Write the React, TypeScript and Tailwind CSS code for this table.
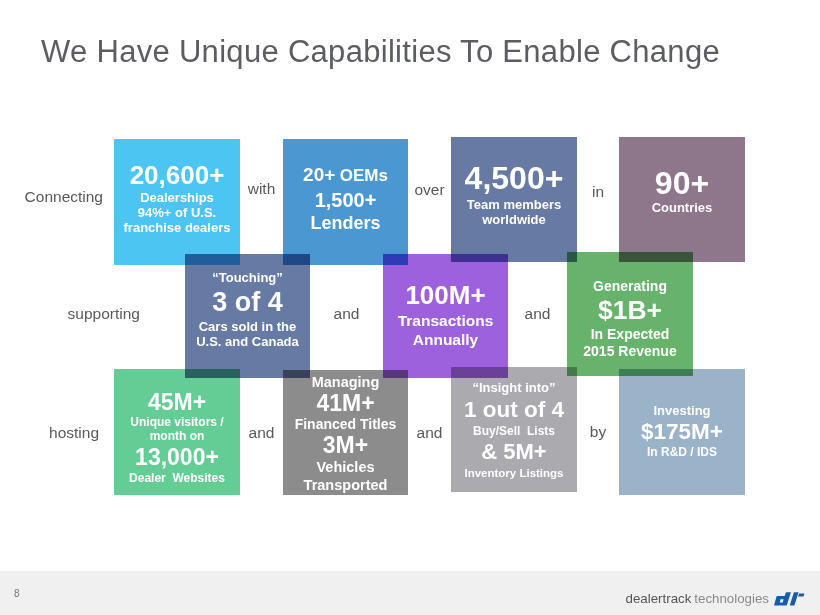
import React from 'react';

const font = { fontFamily: '"Liberation Sans", Arial, sans-serif' };

function Word({ className, children }: { className: string; children: React.ReactNode }) {
  return <div className={`flex items-center text-[15.5px] text-[#595959] ${className}`}>{children}</div>;
}

function Logo() {
  return (
    <svg width="31" height="14" viewBox="0 0 30 13" className="ml-[5px]">
      <path fillRule="evenodd" fill="#1a5ba6" d="M0 12.8 L2.6 3.6 L10.4 3.6 L11.6 0 L16.4 0 L12.3 12.8 Z M5.6 9.8 L6.4 6.8 L9.3 6.8 L8.4 9.8 Z" />
      <path fill="#1a5ba6" d="M15.2 12.8 L19.3 0 L23.8 0 L19.7 12.8 Z" />
      <path fill="#1a5ba6" d="M23.4 4 L24.3 1.2 L29.5 1.2 L28.6 4 Z" />
    </svg>
  );
}

export default function App() {
  return (
    <div className="w-[820px] h-[615px] bg-white flex flex-col overflow-hidden" style={font}>
      <div className="h-[571px] flex flex-col">
        {/* Title */}
        <h1 className="mt-[34px] ml-[41px] text-[31px] leading-[36px] tracking-[0.3px] text-[#5b5d62] font-normal">
          We Have Unique Capabilities To Enable Change
        </h1>

        {/* Row 1 */}
        <div className="flex items-start h-[128px] mt-[67px]">
          <Word className="w-[114px] h-full justify-end pr-[11px] pb-[8px]">Connecting</Word>
          <div className="w-[126px] h-[126px] mt-[2px] bg-[#4cc5f2] flex flex-col items-center pt-[22px] text-white font-bold">
            <div className="text-[26px] leading-[28px]">20,600+</div>
            <div className="text-[13px] leading-[15px] mt-[1px]">Dealerships</div>
            <div className="text-[13px] leading-[15px]">94%+ of U.S.</div>
            <div className="text-[13px] leading-[15px]">franchise dealers</div>
          </div>
          <Word className="w-[43px] h-full justify-center pb-[24px]">with</Word>
          <div className="w-[125px] h-[126px] mt-[2px] bg-[#4b97d1] flex flex-col items-center pt-[24px] text-white font-bold">
            <div className="leading-[24px]"><span className="text-[19px]">20+</span> <span className="text-[17px]">OEMs</span></div>
            <div className="text-[20px] leading-[24px]">1,500+</div>
            <div className="text-[18px] leading-[22px]">Lenders</div>
          </div>
          <Word className="w-[43px] h-full justify-center pb-[22px]">over</Word>
          <div className="w-[126px] h-[125px] bg-[#667aa3] flex flex-col items-center pt-[24px] text-white font-bold">
            <div className="text-[32px] leading-[34px]">4,500+</div>
            <div className="text-[13px] leading-[15px] mt-[2px]">Team members</div>
            <div className="text-[13px] leading-[15px]">worldwide</div>
          </div>
          <Word className="w-[42px] h-full justify-center pb-[18px]">in</Word>
          <div className="w-[126px] h-[125px] bg-[#8e778b] flex flex-col items-center pt-[29px] text-white font-bold">
            <div className="text-[32px] leading-[34px]">90+</div>
            <div className="text-[13px] leading-[16px]">Countries</div>
          </div>
        </div>

        {/* Row 2 */}
        <div className="relative z-10 mix-blend-multiply flex items-start h-[126px] mt-[-13px]">
          <Word className="w-[185px] h-full justify-end pr-[45px] pb-[2px]">supporting</Word>
          <div className="w-[125px] h-[124px] mt-[2px] bg-[#667aa3] flex flex-col items-center pt-[16px] text-white font-bold">
            <div className="text-[13px] leading-[16px]">“Touching”</div>
            <div className="text-[27px] leading-[32px]">3 of 4</div>
            <div className="text-[13px] leading-[15px] mt-[1px]">Cars sold in the</div>
            <div className="text-[13px] leading-[15px]">U.S. and Canada</div>
          </div>
          <Word className="w-[73px] h-full justify-center pb-[2px]">and</Word>
          <div className="w-[125px] h-[124px] mt-[2px] bg-[#9e61de] flex flex-col items-center pt-[27px] text-white font-bold">
            <div className="text-[26px] leading-[28px]">100M+</div>
            <div className="text-[15.5px] leading-[19px] mt-[2px]">Transactions</div>
            <div className="text-[15.5px] leading-[19px]">Annually</div>
          </div>
          <Word className="w-[59px] h-full justify-center pb-[2px]">and</Word>
          <div className="w-[126px] h-[124px] bg-[#67b36b] flex flex-col items-center pt-[26px] text-white font-bold">
            <div className="text-[14px] leading-[17px]">Generating</div>
            <div className="text-[26.5px] leading-[31px]">$1B+</div>
            <div className="text-[14px] leading-[17px]">In Expected</div>
            <div className="text-[14px] leading-[17px]">2015 Revenue</div>
          </div>
        </div>

        {/* Row 3 */}
        <div className="flex items-start h-[128px] mt-[-11px]">
          <Word className="w-[114px] h-full justify-end pr-[15px] pt-[4px]">hosting</Word>
          <div className="w-[126px] h-[126px] mt-[2px] bg-[#64cc95] flex flex-col items-center pt-[21px] text-white font-bold">
            <div className="text-[23px] leading-[24px]">45M+</div>
            <div className="text-[12px] leading-[14px] mt-[1px]">Unique visitors /</div>
            <div className="text-[12px] leading-[14px]">month on</div>
            <div className="text-[23px] leading-[28px]">13,000+</div>
            <div className="text-[12px] leading-[14px]">Dealer&nbsp; Websites</div>
          </div>
          <Word className="w-[43px] h-full justify-center pt-[4px]">and</Word>
          <div className="w-[125px] h-[125px] mt-[3px] bg-[#8c8c8c] flex flex-col items-center pt-[3px] text-white font-bold">
            <div className="text-[14.5px] leading-[18px]">Managing</div>
            <div className="text-[23px] leading-[24px]">41M+</div>
            <div className="text-[14px] leading-[18px]">Financed Titles</div>
            <div className="text-[23px] leading-[24px]">3M+</div>
            <div className="text-[14.5px] leading-[18px] mt-[1px]">Vehicles</div>
            <div className="text-[14.5px] leading-[18px]">Transported</div>
          </div>
          <Word className="w-[43px] h-full justify-center pt-[4px]">and</Word>
          <div className="w-[126px] h-[125px] bg-[#ababaf] flex flex-col items-center pt-[13px] text-white font-bold">
            <div className="text-[13px] leading-[16px]">“Insight into”</div>
            <div className="text-[22.5px] leading-[28px]">1 out of 4</div>
            <div className="text-[12px] leading-[14px]">Buy/Sell&nbsp; Lists</div>
            <div className="text-[22px] leading-[28px]">&amp; 5M+</div>
            <div className="text-[11.5px] leading-[14px]">Inventory Listings</div>
          </div>
          <Word className="w-[42px] h-full justify-center pt-[2px]">by</Word>
          <div className="w-[126px] h-[126px] mt-[2px] bg-[#9bb3c9] flex flex-col items-center pt-[34px] text-white font-bold">
            <div className="text-[13px] leading-[16px]">Investing</div>
            <div className="text-[22.5px] leading-[26px]">$175M+</div>
            <div className="text-[12px] leading-[14px]">In R&amp;D / IDS</div>
          </div>
        </div>
      </div>

      {/* Footer */}
      <div className="h-[44px] bg-[#f0f0f0] flex items-start justify-between pl-[14px] pr-[15px]">
        <div className="text-[10px] leading-[10px] mt-[18px] text-[#777]">8</div>
        <div className="flex items-center mt-[20px] h-[16px]">
          <span className="text-[13.3px] leading-[16px] text-[#555]">dealertrack</span>
          <span className="text-[13.3px] leading-[16px] text-[#8a8a8a] ml-[3px]">technologies</span>
          <Logo />
        </div>
      </div>
    </div>
  );
}
